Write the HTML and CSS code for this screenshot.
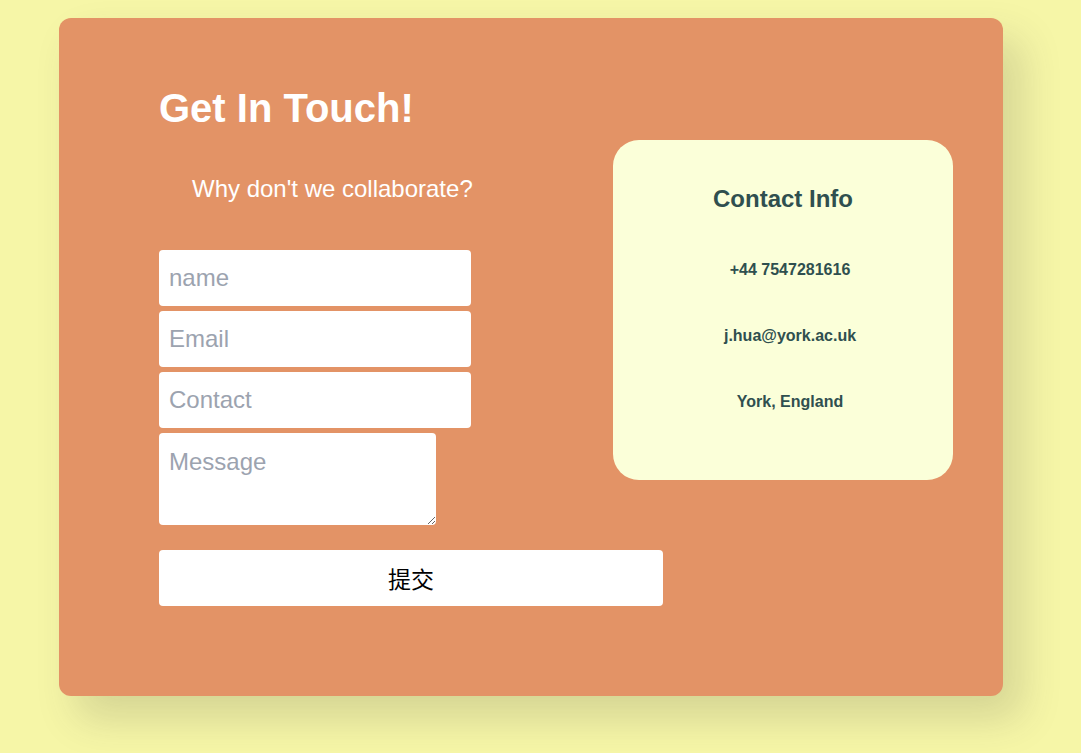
FILE: index.html
```html
<!DOCTYPE html>
<html lang="en">
<head>
<meta charset="utf-8">
<title>Get In Touch</title>
<link rel="stylesheet" href="styles.css">
</head>
<body>
  <section class="card">
    <h1 class="title">Get In Touch!</h1>
    <div class="row">
      <form class="form">
        <p class="subtitle">Why don't we collaborate?</p>
        <div class="fields">
          <input class="field" type="text" placeholder="name">
          <input class="field" type="email" placeholder="Email">
          <input class="field" type="text" placeholder="Contact">
          <textarea class="field message" placeholder="Message"></textarea>
        </div>
      </form>
      <aside class="info">
        <h2 class="info-title">Contact Info</h2>
        <div class="info-list">
          <p class="info-item">+44 7547281616</p>
          <p class="info-item">j.hua@york.ac.uk</p>
          <p class="info-item">York, England</p>
        </div>
      </aside>
    </div>
    <button class="submit" type="button">提交</button>
  </section>
</body>
</html>
```
FILE: styles.css
```css
html, body {
  margin: 0;
  padding: 0;
}
body {
  background: #f6f6a7;
  font-family: "Liberation Sans", Arial, "Noto Sans CJK SC", sans-serif;
  min-height: 753px;
  padding-top: 18px;
  box-sizing: border-box;
}
.card {
  width: 944px;
  height: 678px;
  margin-left: 59px;
  box-sizing: border-box;
  padding: 67px 50px 0 100px;
  background: #e39366;
  border-radius: 12px;
  box-shadow: 18px 22px 40px rgba(60, 60, 60, 0.18);
  display: flex;
  flex-direction: column;
}
.title {
  margin: 0;
  color: #ffffff;
  font-size: 40px;
  line-height: 46px;
  font-weight: bold;
}
.row {
  display: flex;
  justify-content: space-between;
  align-items: flex-start;
}
.form {
  display: flex;
  flex-direction: column;
}
.subtitle {
  margin: 44px 0 0 33px;
  color: #ffffff;
  font-size: 24px;
  line-height: 28px;
}
.fields {
  margin-top: 47px;
  display: flex;
  flex-direction: column;
  align-items: flex-start;
  gap: 5px;
}
.field {
  width: 312px;
  height: 56px;
  box-sizing: border-box;
  border: none;
  border-radius: 4px;
  background: #ffffff;
  padding: 0 10px;
  font-family: "Liberation Sans", Arial, sans-serif;
  font-size: 24px;
  color: #333;
  outline: none;
  margin: 0;
}
.field::placeholder {
  color: #9ca3af;
}
.message {
  width: 277px;
  height: 92px;
  padding: 15px 10px;
  resize: both;
  display: block;
}
.info {
  margin-top: 9px;
  width: 340px;
  height: 340px;
  box-sizing: border-box;
  background: #fbffd9;
  border-radius: 26px;
  padding-top: 45px;
  color: #2f4f4f;
  text-align: center;
}
.info-title {
  margin: 0;
  font-size: 24px;
  line-height: 28px;
  font-weight: bold;
}
.info-list {
  margin-top: 48px;
  display: flex;
  flex-direction: column;
  gap: 48px;
  padding-left: 14px;
}
.info-item {
  margin: 0;
  font-size: 16px;
  line-height: 18px;
  font-weight: bold;
}
.submit {
  margin-top: 25px;
  width: 504px;
  height: 56px;
  border: none;
  border-radius: 4px;
  background: #ffffff;
  color: #000000;
  font-family: "Liberation Sans", "Noto Sans CJK SC", sans-serif;
  font-size: 23px;
  padding: 0;
  cursor: pointer;
}
```
